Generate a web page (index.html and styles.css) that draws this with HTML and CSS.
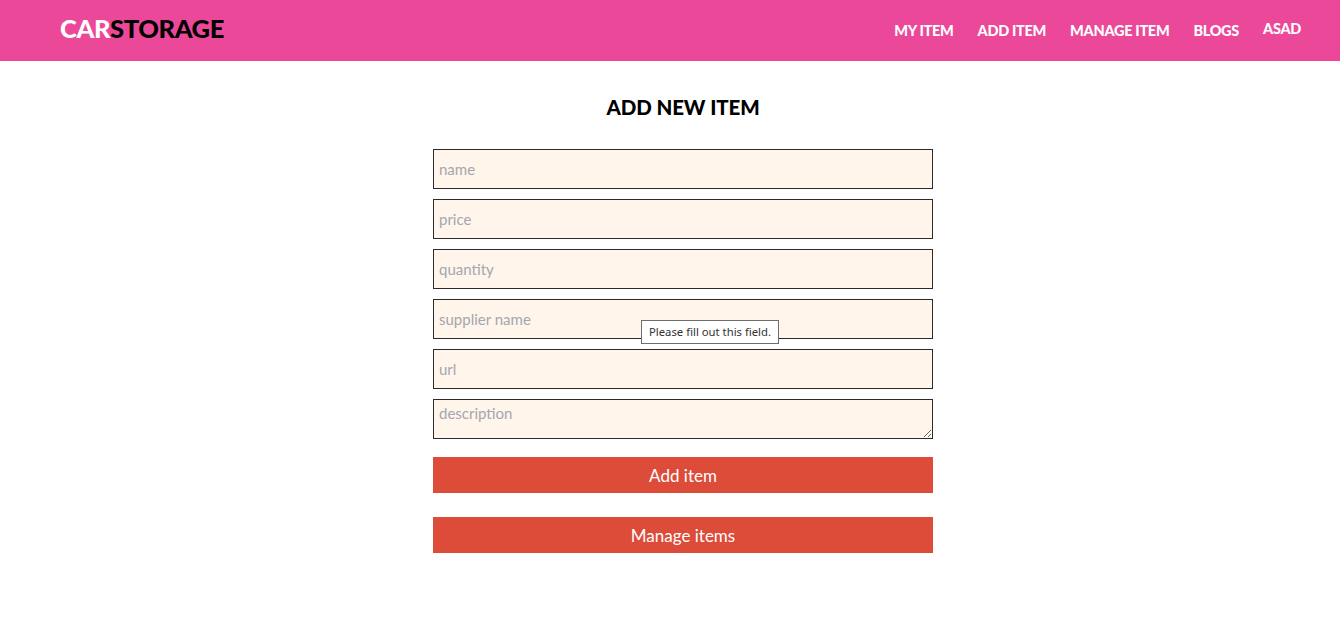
FILE: index.html
```html
<!DOCTYPE html>
<html>
<head>
<meta charset="utf-8">
<link rel="stylesheet" href="styles.css">
</head>
<body>
<header class="navbar">
  <div class="logo"><span class="logo-car">CAR</span><span class="logo-storage">STORAGE</span></div>
  <nav class="nav">
    <a class="nav-link">MY ITEM</a>
    <a class="nav-link">ADD ITEM</a>
    <a class="nav-link">MANAGE ITEM</a>
    <a class="nav-link">BLOGS</a>
    <a class="nav-link nav-user">ASAD</a>
  </nav>
</header>
<main class="main">
  <h2 class="title">ADD NEW ITEM</h2>
  <form class="form">
    <input class="field" placeholder="name">
    <input class="field" placeholder="price">
    <input class="field" placeholder="quantity">
    <div class="field-wrap">
      <input class="field" placeholder="supplier name">
      <div class="tooltip">Please fill out this field.</div>
    </div>
    <input class="field" placeholder="url">
    <textarea class="field area" placeholder="description"></textarea>
    <button type="button" class="btn btn-add">Add item</button>
    <button type="button" class="btn btn-manage">Manage items</button>
  </form>
</main>
</body>
</html>
```
FILE: styles.css
```css
* { box-sizing: border-box; }
body {
  margin: 0;
  font-family: Lato, "Open Sans", sans-serif;
  background: #fff;
}
.navbar {
  height: 61px;
  background: #ec4899;
  display: flex;
  align-items: center;
  justify-content: space-between;
  padding: 0 39px 0 60px;
}
.logo {
  font-size: 25.5px;
  font-weight: 900;
  letter-spacing: -0.4px;
  padding-bottom: 5px;
}
.logo-car { color: #fff; }
.logo-storage { color: #000; }
.nav {
  display: flex;
  gap: 24px;
  align-items: center;
}
.nav-link {
  color: #fff;
  font-size: 14.5px;
  font-weight: 900;
  letter-spacing: -0.3px;
}
.nav-user { margin-top: -4px; }
.main {
  display: flex;
  flex-direction: column;
  align-items: center;
  padding-left: 26px;
}
.title {
  margin: 32px 0 28px;
  font-size: 20.5px;
  font-weight: 900;
  color: #000;
  letter-spacing: -0.1px;
  line-height: 28px;
}
.form {
  width: 500px;
  display: flex;
  flex-direction: column;
  gap: 10px;
}
.field-wrap { position: relative; }
.field {
  display: block;
  width: 100%;
  height: 40px;
  border: 1px solid #2b2b2b;
  background: #fff5eb;
  font-family: Lato, "Open Sans", sans-serif;
  font-size: 15px;
  padding: 0 5px;
  color: #333;
  outline: none;
  margin: 0;
}
.field::placeholder { color: #a4a7b0; }
.area {
  resize: vertical;
  padding-top: 4px;
}
.tooltip {
  position: absolute;
  left: 208px;
  top: 21px;
  background: #fff;
  border: 1px solid #6e6e6e;
  font-family: "Noto Sans", sans-serif;
  font-size: 11.3px;
  color: #333;
  padding: 3px 7px 4px 7px;
  white-space: nowrap;
}
.btn {
  height: 36px;
  border: none;
  background: #dd4b39;
  color: #fff;
  font-family: Lato, "Open Sans", sans-serif;
  font-size: 17px;
  padding: 0;
}
.btn-add { margin-top: 8px; }
.btn-manage { margin-top: 14px; }
```
